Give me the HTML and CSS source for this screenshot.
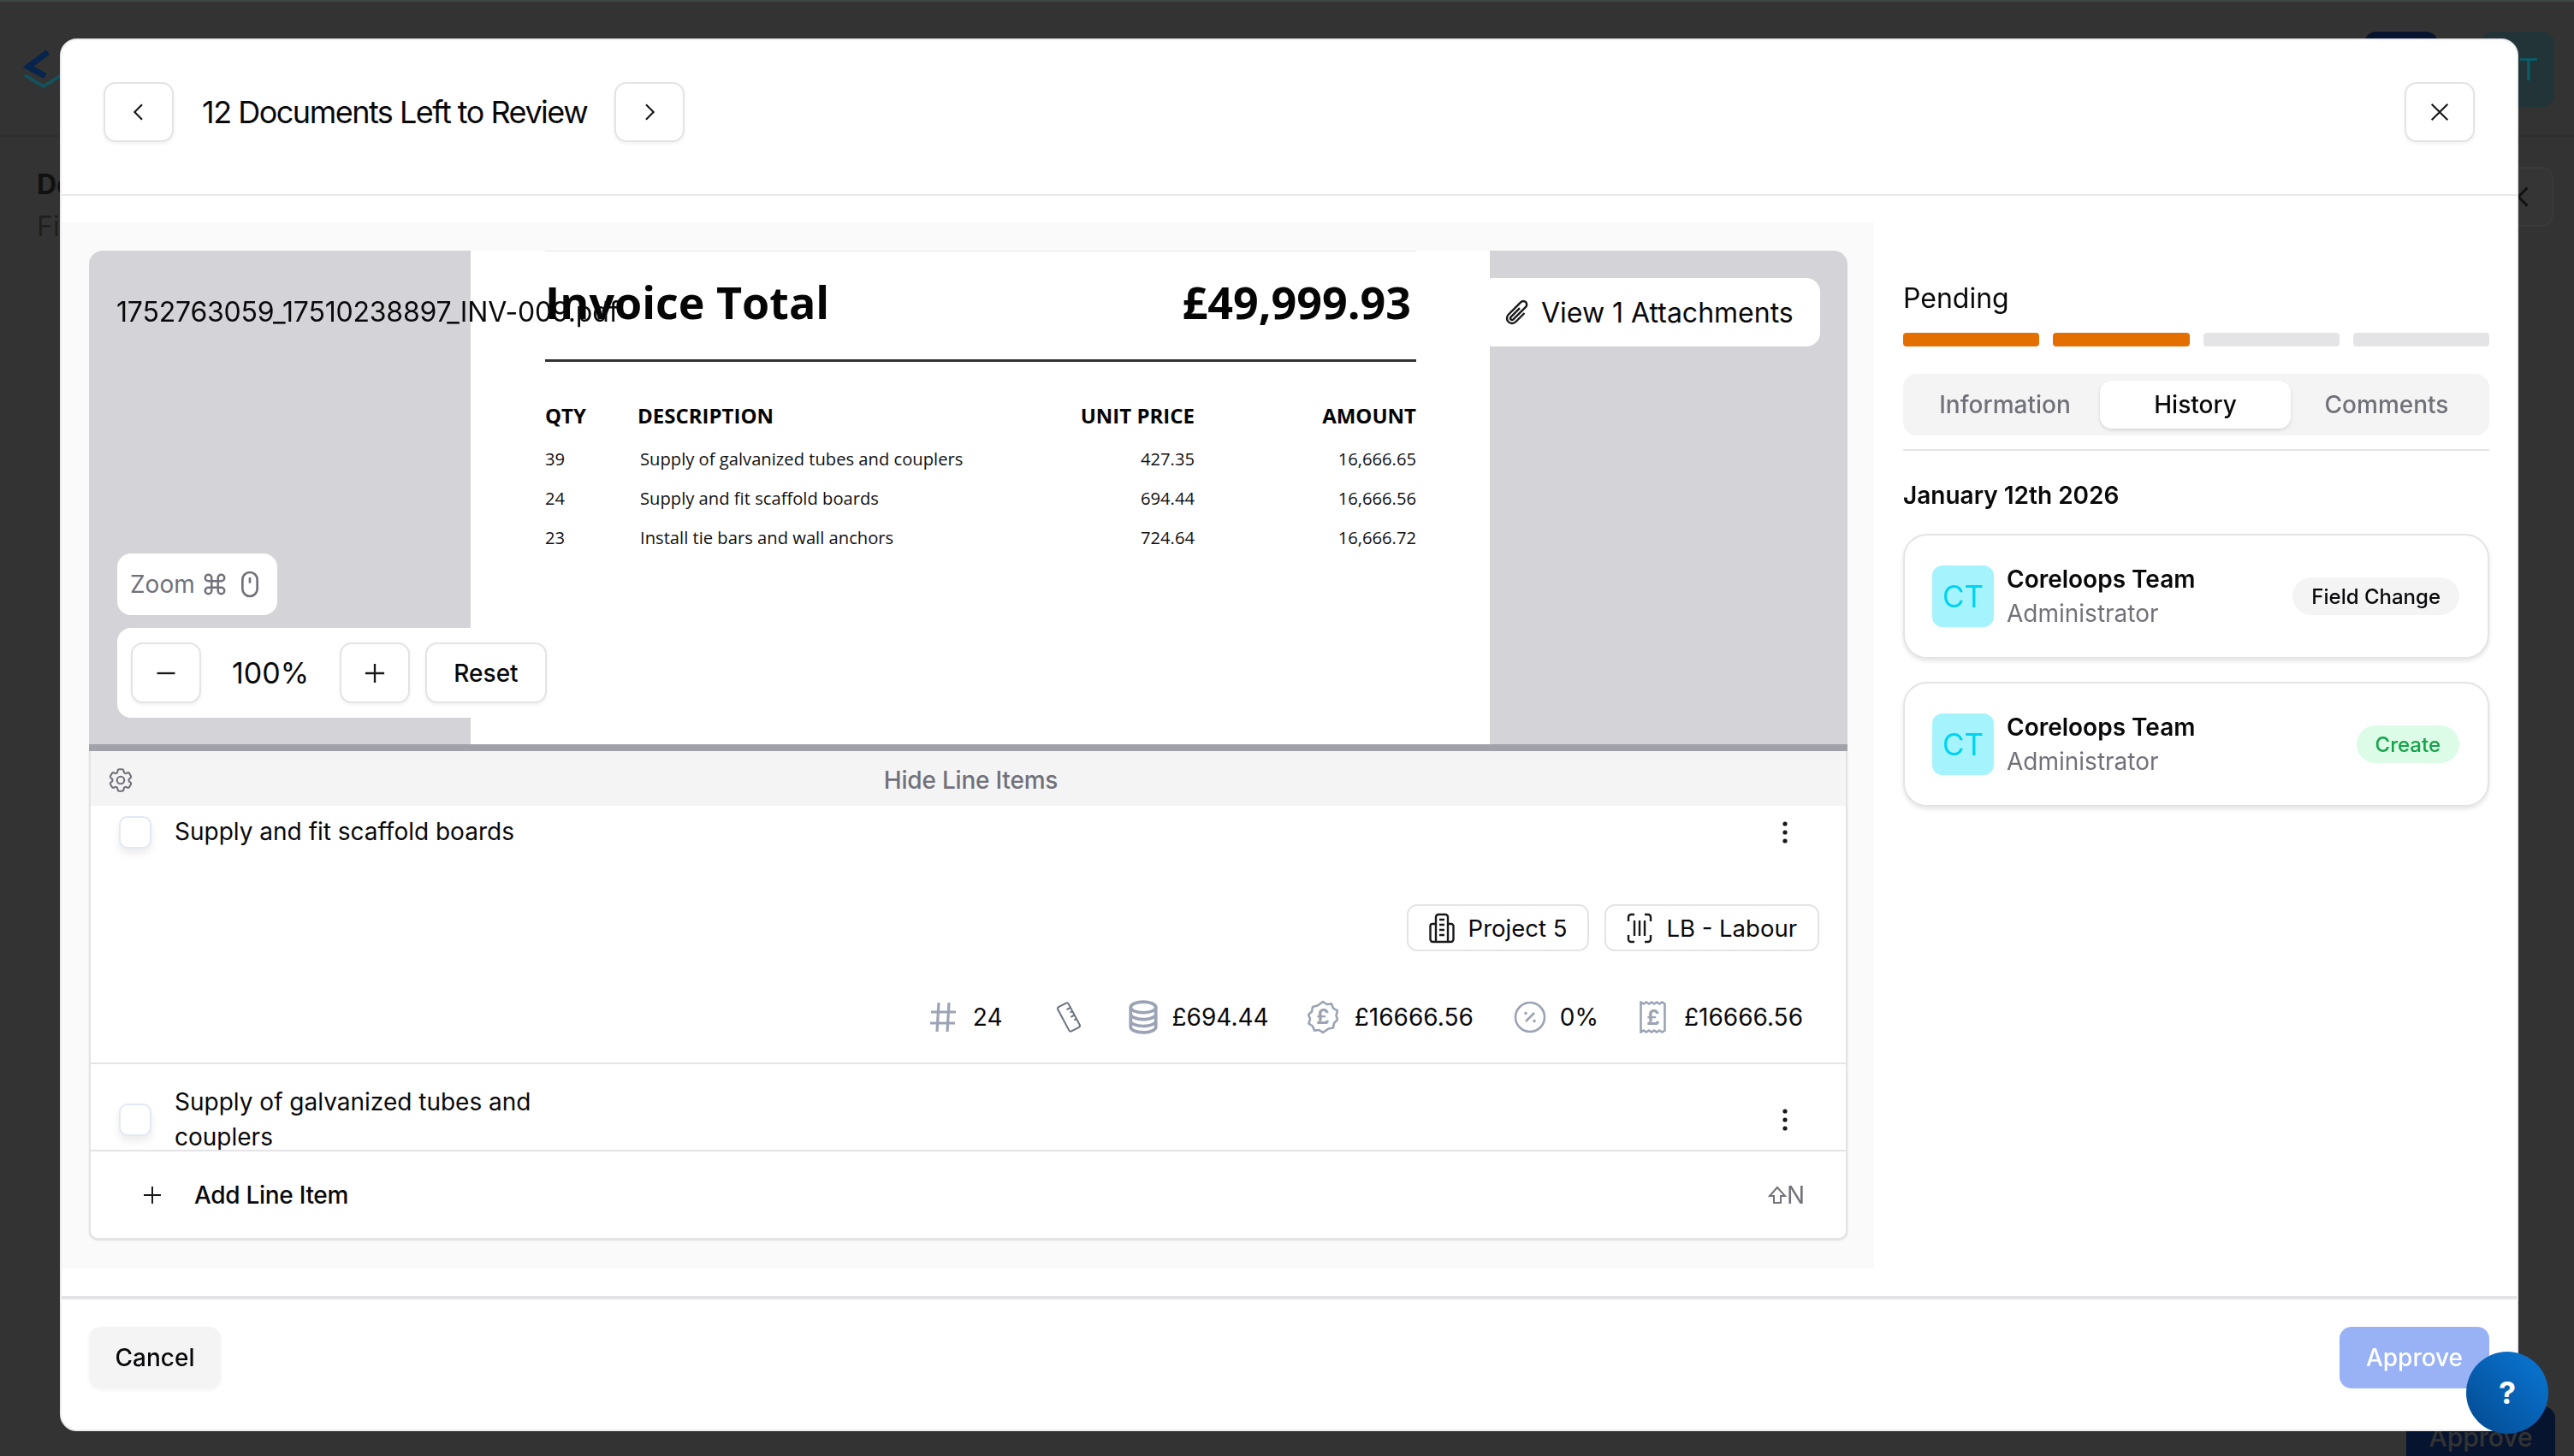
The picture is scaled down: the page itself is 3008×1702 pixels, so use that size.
FILE: index.html
```html
<!DOCTYPE html>
<html lang="en">
<head>
<meta charset="utf-8">
<title>Documents</title>
<link rel="stylesheet" href="styles.css">
</head>
<body>
<div class="backdrop-page">
  <header class="bg-header">
    <svg class="bg-logo" viewBox="0 0 48 48" width="48" height="48"><path d="M30 3 7 20l20 11" fill="none" stroke="#06244c" stroke-width="7"/><path d="M3 30l22 13 22-14" fill="none" stroke="#14525c" stroke-width="4"/></svg>
    <div class="bg-actions"><span class="bg-navy"></span><span class="bg-teal">CT</span></div>
  </header>
  <div class="bg-heading"><strong>Documents</strong><span>Files</span></div>
  <div class="bg-back"><svg viewBox="0 0 24 24" width="36" height="36"><path d="M15 5l-7 7 7 7" fill="none" stroke="#111" stroke-width="2"/></svg></div>
  <div class="bg-approve">Approve</div>
</div>

<div class="modal">
  <div class="modal-head">
    <button class="icon-btn"><svg class="ico-sm" viewBox="0 0 24 24"><path d="M15 5.500 8.500 12l6.500 6.500"/></svg></button>
    <h1 class="modal-title">12 Documents Left to Review</h1>
    <button class="icon-btn"><svg class="ico-sm" viewBox="0 0 24 24"><path d="M9 5.500 15.500 12 9 18.500"/></svg></button>
    <button class="icon-btn close-btn"><svg class="ico-sm" viewBox="0 0 24 24"><path d="M5 5l14 14M19 5 5 19"/></svg></button>
  </div>

  <div class="modal-main">
    <section class="work">
      <div class="viewer">
        <div class="pdf-page">
          <div class="inv-top"><span>Invoice Total</span><span>£49,999.93</span></div>
          <div class="inv-table">
            <b>QTY</b><b>DESCRIPTION</b><b class="r">UNIT PRICE</b><b class="r">AMOUNT</b>
            <span>39</span><span class="d">Supply of galvanized tubes and couplers</span><span class="r">427.35</span><span class="r">16,666.65</span>
            <span>24</span><span class="d">Supply and fit scaffold boards</span><span class="r">694.44</span><span class="r">16,666.56</span>
            <span>23</span><span class="d">Install tie bars and wall anchors</span><span class="r">724.64</span><span class="r">16,666.72</span>
          </div>
        </div>
        <div class="file-name">1752763059_17510238897_INV-009.pdf</div>
        <button class="attach"><svg class="ico-clip" viewBox="0 0 24 24"><path d="m18.375 12.739-7.693 7.693a4.500 4.500 0 0 1-6.364-6.364l10.94-10.94A3 3 0 1 1 19.500 7.372L8.552 18.320m.009-.01-.01.01m5.699-9.941-7.810 7.810a1.500 1.500 0 0 0 2.112 2.130"/></svg>View 1 Attachments</button>
        <div class="zoom-hint">Zoom
          <svg class="ico-cmd" viewBox="0 0 24 24"><path d="M15 6v12a3 3 0 1 0 3-3H6a3 3 0 1 0 3 3V6a3 3 0 1 0-3 3h12a3 3 0 1 0-3-3"/></svg>
          <svg class="ico-mouse" viewBox="0 0 16 24"><rect x="1.500" y="1.500" width="13" height="21" rx="6.500"/><path d="M8 6v5"/></svg>
        </div>
        <div class="zoom-ctrl">
          <button class="zbtn"><svg class="ico-z" viewBox="0 0 24 24"><path d="M3 12h18"/></svg></button>
          <span class="zval">100%</span>
          <button class="zbtn"><svg class="ico-z" viewBox="0 0 24 24"><path d="M12 2.500v19M2.500 12h19"/></svg></button>
          <button class="zbtn zreset">Reset</button>
        </div>
      </div>

      <div class="lines">
        <div class="lines-bar">
          <svg class="ico-gear" viewBox="0 0 24 24"><path d="M9.594 3.940c.09-.542.56-.94 1.110-.94h2.593c.55 0 1.020.398 1.110.94l.213 1.281c.063.374.313.686.645.870.074.040.147.083.22.127.325.196.72.257 1.075.124l1.217-.456a1.125 1.125 0 0 1 1.370.49l1.296 2.247a1.125 1.125 0 0 1-.26 1.431l-1.003.827c-.293.241-.438.613-.43.992a7.723 7.723 0 0 1 0 .255c-.008.378.137.75.43.991l1.004.827c.424.35.534.955.26 1.430l-1.298 2.247a1.125 1.125 0 0 1-1.369.491l-1.217-.456c-.355-.133-.75-.072-1.076.124a6.470 6.470 0 0 1-.22.128c-.331.183-.581.495-.644.869l-.213 1.281c-.09.543-.56.94-1.110.94h-2.594c-.55 0-1.019-.398-1.110-.94l-.213-1.281c-.062-.374-.312-.686-.644-.87a6.520 6.520 0 0 1-.22-.127c-.325-.196-.72-.257-1.076-.124l-1.217.456a1.125 1.125 0 0 1-1.369-.49l-1.297-2.247a1.125 1.125 0 0 1 .26-1.431l1.004-.827c.292-.24.437-.613.43-.991a6.932 6.932 0 0 1 0-.255c.007-.38-.138-.751-.43-.992l-1.004-.827a1.125 1.125 0 0 1-.26-1.430l1.297-2.247a1.125 1.125 0 0 1 1.370-.491l1.216.456c.356.133.751.072 1.076-.124.072-.044.146-.086.22-.128.332-.183.582-.495.644-.869l.214-1.280Z"/><circle cx="12" cy="12" r="3"/></svg>
          <span>Hide Line Items</span>
        </div>
        <div class="items">
          <article class="item item-first">
            <div class="item-row">
              <span class="check"></span>
              <p class="item-name">Supply and fit scaffold boards</p>
              <svg class="ico-dots" viewBox="0 0 8 28"><circle cx="4" cy="4" r="2.600"/><circle cx="4" cy="14" r="2.600"/><circle cx="4" cy="24" r="2.600"/></svg>
            </div>
            <div class="chips">
              <span class="chip"><svg class="ico-chip" viewBox="0 0 30 38"><path d="M8 35V6a3 3 0 0 1 3-3h8a3 3 0 0 1 3 3v29M8 14H4a2.500 2.500 0 0 0-2.500 2.500V32A3 3 0 0 0 4.500 35h21a3 3 0 0 0 3-3V16.500A2.500 2.500 0 0 0 26 14h-4M12 9h6M12 15h6M12 21h6M12 27h6"/></svg>Project 5</span>
              <span class="chip"><svg class="ico-chip" viewBox="0 0 30 38"><path d="M2 11V6a3 3 0 0 1 3-3h4M21 3h4a3 3 0 0 1 3 3v5M28 27v5a3 3 0 0 1-3 3h-4M9 35H5a3 3 0 0 1-3-3v-5M9 10v18M15 10v18M21 10v18"/></svg>LB - Labour</span>
            </div>
            <div class="metrics">
              <span class="metric"><svg class="m-ico m-hash" viewBox="0 0 32 38"><path d="M11 2 9 36M23 2l-2 34M2 13h29M1 26h29"/></svg>24</span>
              <span class="metric metric-empty"><svg class="m-ico m-ruler" viewBox="0 0 34 38"><g transform="rotate(-28 17 19)"><rect x="10" y="3" width="14" height="32" rx="2"/><path d="M24 10h-5M24 15h-3M24 20h-5M24 25h-3"/></g></svg></span>
              <span class="metric metric-stack"><svg class="m-ico m-stack" viewBox="0 0 34 38"><ellipse cx="17" cy="8" rx="14" ry="6"/><path d="M3 8v22c0 3.300 6.300 6 14 6s14-2.700 14-6V8M3 15.500c0 3.300 6.300 6 14 6s14-2.700 14-6M3 23c0 3.300 6.300 6 14 6s14-2.700 14-6"/></svg>£694.44</span>
              <span class="metric"><svg class="m-ico m-badge" viewBox="0 0 36 40"><path d="M18 2l4.500 3 5.500-.5 2 5 5 3-1.500 5.500 1.500 5-4 4-1 5.500-5.500 1L18 38l-4.500-3-5.500.5-2-5-4.500-3L3 22l-2-5 4-3.500L6 8l5.500-1.500z"/><text class="m-text" x="18" y="28" text-anchor="middle">£</text></svg>£16666.56</span>
              <span class="metric metric-pct"><svg class="m-ico m-pct" viewBox="0 0 38 38"><circle cx="19" cy="19" r="17"/><path d="M24 14 14 24"/><circle class="m-fill" cx="14" cy="14.500" r="1.800"/><circle class="m-fill" cx="24" cy="23.500" r="1.800"/></svg>0%</span>
              <span class="metric metric-total"><svg class="m-ico m-receipt" viewBox="0 0 32 38"><path d="M1.500 1.500l3.250 2 3-2 3.250 2 3-2 3 2 3-2 3.250 2 3-2 3.250 2V34.500l-3.250 2-3-2-3.250 2-3-2-3 2-3-2-3.250 2-3-2-3.250 2z" /><text class="m-text" x="16" y="28" text-anchor="middle">£</text></svg>£16666.56</span>
            </div>
          </article>
          <article class="item item-second">
            <div class="item-row">
              <span class="check"></span>
              <p class="item-name">Supply of galvanized tubes and couplers</p>
              <svg class="ico-dots" viewBox="0 0 8 28"><circle cx="4" cy="4" r="2.600"/><circle cx="4" cy="14" r="2.600"/><circle cx="4" cy="24" r="2.600"/></svg>
            </div>
          </article>
        </div>
        <div class="add-row">
          <svg class="ico-plus" viewBox="0 0 24 24"><path d="M12 2v20M2 12h20"/></svg>
          <span class="add-label">Add Line Item</span>
          <span class="kbd"><svg class="ico-shift" viewBox="0 0 22 24"><path d="M11 3 2 13h5v8h8v-8h5z"/></svg>N</span>
        </div>
      </div>
    </section>

    <aside class="side">
      <div class="status">Pending</div>
      <div class="steps"><i class="on"></i><i class="on"></i><i></i><i></i></div>
      <div class="tabs"><span>Information</span><span class="active">History</span><span>Comments</span></div>
      <h2 class="date">January 12th 2026</h2>
      <div class="h-card">
        <span class="avatar">CT</span>
        <div class="who"><strong>Coreloops Team</strong><span>Administrator</span></div>
        <span class="pill">Field Change</span>
      </div>
      <div class="h-card">
        <span class="avatar">CT</span>
        <div class="who"><strong>Coreloops Team</strong><span>Administrator</span></div>
        <span class="pill pill-green">Create</span>
      </div>
    </aside>
  </div>

  <footer class="modal-foot">
    <button class="btn-cancel">Cancel</button>
    <button class="btn-approve">Approve</button>
  </footer>
</div>

<button class="help">?</button>
</body>
</html>
```

FILE: styles.css
```css
* { box-sizing: border-box; }
html, body { margin: 0; height: 100%; }
body {
  background: #333333;
  font-family: Inter, "Noto Sans", sans-serif;
  color: #09090b;
  overflow: hidden;
  border-top: 2px solid #3f4746;
}
button { font-family: inherit; color: inherit; cursor: pointer; }
p, h1, h2 { margin: 0; font-weight: inherit; }
svg { display: block; flex: none; fill: none; stroke: currentColor; }

/* page dimmed behind the dialog */
.bg-header {
  height: 158px;
  display: flex;
  align-items: flex-start;
  justify-content: space-between;
  padding: 35px 23px 0 26px;
  border-bottom: 2px solid #2e2e2e;
}
.bg-logo { margin-top: 21px; }
.bg-actions { display: flex; gap: 50px; }
.bg-navy { width: 86px; height: 88px; border-radius: 14px; background: #07142f; }
.bg-teal {
  width: 86px; height: 88px; border-radius: 14px; background: #223438;
  color: #0b5b66; font-size: 36px; display: flex; align-items: center; justify-content: center;
}
.bg-heading { padding: 36px 0 0 43px; display: flex; flex-direction: column; gap: 10px; font-size: 32px; color: #111; }
.bg-heading span { color: #1f1f1f; }
.bg-back {
  position: absolute; left: 2900px; top: 195px; width: 84px; height: 70px;
  display: flex; align-items: center; justify-content: flex-end; padding-right: 15px;
  border: 2px solid #3a3a3a; border-radius: 14px; background: #353535;
}
.bg-approve {
  position: absolute; left: 2812px; top: 1644px; width: 174px; height: 58px;
  background: #07142f; color: #333; font-size: 30px; font-weight: 500;
  display: flex; align-items: flex-end; justify-content: center; padding-bottom: 4px;
  border-radius: 14px 14px 0 0;
}

/* dialog */
.modal {
  position: fixed; left: 70px; top: 45px; width: 2873px; height: 1628px;
  background: #fff; border: 2px solid #ededee; border-radius: 20px;
  display: flex; flex-direction: column; overflow: hidden;
}
.modal-head {
  height: 182px; flex: none;
  display: flex; align-items: flex-start;
  padding: 49px 49px 0;
  border-bottom: 2px solid #e8e8ea;
}
.icon-btn {
  width: 82px; height: 70px; padding: 0;
  display: flex; align-items: center; justify-content: center;
  background: #fff; border: 2px solid #e4e4e7; border-radius: 14px;
  box-shadow: 0 2px 4px rgba(0,0,0,.06);
}
.ico-sm { width: 32px; height: 32px; stroke: #18181b; stroke-width: 1.600; }
.ico-z { width: 28px; height: 28px; stroke: #18181b; stroke-width: 2; }
.modal-title { font-size: 36px; line-height: 70px; font-weight: 400; margin: 0 32px 0 33px; letter-spacing: -1.5px; }
.close-btn { margin-left: auto; }

.modal-main { flex: 1; display: flex; min-height: 0; padding-top: 31px; }
.work {
  width: 2118px; height: 1223px; flex: none; background: #fafafa;
  padding: 33px 31px 34px 32px;
  display: flex; flex-direction: column;
}
.viewer {
  height: 585px; flex: none; position: relative;
  background: #d4d4d8; border-bottom: 8px solid #a1a1aa;
  border-radius: 16px 16px 0 0; overflow: hidden;
  padding-left: 446px;
}
.pdf-page {
  width: 1191px; height: 100%; background: #fff;
  padding: 0 86px 0 87px;
  font-family: "Open Sans", "Noto Sans", sans-serif;
}
.inv-top {
  height: 130px; display: flex; justify-content: space-between; align-items: center;
  font-size: 52px; font-weight: 700; color: #050505;
  border-top: 1px solid #e7e7e7; border-bottom: 3px solid #333;
  padding: 0 6px 9px 0;
}
.inv-table {
  display: grid; grid-template-columns: 108px 1fr 240px 259px;
  grid-auto-rows: 46px; align-items: center;
  padding-top: 40px; font-size: 20.2px; color: #111;
}
.inv-table b { font-size: 24px; font-weight: 700; height: 50px; line-height: 50px; color: #050505; }
.inv-table > span { position: relative; top: 4px; }
.inv-table .r { text-align: right; }
.inv-table .d { padding-left: 3px; }

.file-name {
  position: absolute; left: 32px; top: 50px;
  font-size: 32px; line-height: 44px; letter-spacing: -0.2px; white-space: nowrap; color: #09090b;
}
.attach {
  position: absolute; right: 32px; top: 32px; height: 80px; width: 398px;
  display: flex; align-items: center; gap: 12px; padding: 0 0 0 28px;
  background: #fff; border: 0; border-radius: 16px; font-size: 32px;
}
.ico-clip { width: 32px; height: 32px; stroke: #18181b; stroke-width: 1.800; }
.zoom-hint {
  position: absolute; left: 33px; top: 354px; width: 187px; height: 72px;
  display: flex; align-items: center; gap: 8px; padding-left: 15px;
  background: #fff; border-radius: 16px; color: #71717a; font-size: 28px;
}
.ico-cmd { width: 30px; height: 30px; stroke-width: 2; }
.ico-mouse { width: 24px; height: 32px; stroke-width: 2; margin-left: 6px; }
.zoom-ctrl {
  position: absolute; left: 33px; top: 441px; width: 520px; height: 105px;
  display: flex; align-items: center; padding-left: 16px;
  background: #fff; border-radius: 16px;
}
.zbtn {
  width: 82px; height: 71px; padding: 0;
  display: flex; align-items: center; justify-content: center;
  background: #fff; border: 2px solid #e4e4e7; border-radius: 14px;
  box-shadow: 0 2px 4px rgba(0,0,0,.06); font-size: 28px; font-weight: 500;
}
.zval { width: 162px; text-align: center; font-size: 34px; }
.zreset { width: 142px; margin-left: 18px; }

.lines {
  flex: 1; min-height: 0; background: #fff;
  border: 2px solid #e4e4e7; border-top: 0;
  border-radius: 0 0 10px 10px;
  display: flex; flex-direction: column;
  box-shadow: 0 1px 2px rgba(0,0,0,.12);
}
.lines-bar {
  height: 64px; flex: none; position: relative;
  display: flex; align-items: center; justify-content: center;
  padding: 4px 0 0 6px; background: #f4f4f5; color: #71717a; font-size: 28px; font-weight: 500; letter-spacing: -0.2px;
}
.ico-gear { position: absolute; left: 18px; top: 17px; width: 34px; height: 34px; stroke-width: 1.500; }
.items { height: 402px; flex: none; overflow: hidden; }
.item-first { height: 302px; padding-top: 10px; border-bottom: 2px solid #e4e4e7; }
.item-second { padding-top: 24px; }
.item-row { display: flex; align-items: center; padding: 0 67px 0 33px; }
.check {
  width: 38px; height: 38px; flex: none; background: #fff;
  border: 2px solid #e2e8f5; border-radius: 10px;
  box-shadow: 0 6px 10px rgba(0,0,0,.08);
}
.item-name { font-size: 28px; line-height: 41px; margin-left: 27px; width: 460px; flex: none; }
.ico-dots { margin-left: auto; width: 8px; height: 28px; fill: #18181b; stroke: none; }
.chips { display: flex; justify-content: flex-end; gap: 18px; margin-top: 64px; padding-right: 31px; }
.chip {
  height: 55px; display: flex; align-items: center; gap: 16px; padding: 0 24px;
  border: 2px solid #e4e4e7; border-radius: 12px; font-size: 27.5px;
}
.ico-chip { width: 30px; height: 38px; stroke: #18181b; stroke-width: 2.400; }
.metrics { display: flex; justify-content: flex-end; align-items: center; gap: 47px; margin-top: 57px; padding-right: 50px; height: 40px; }
.metric { display: flex; align-items: center; gap: 19px; font-size: 28px; }
.metric-empty { margin: 0 5px 0 14px; }
.metric-stack { gap: 15px; margin-right: -2px; }
.metric-pct { gap: 16px; }
.metric-total { gap: 20px; margin-left: 1px; }
.m-ico { height: 38px; stroke: #9ca3b4; stroke-width: 2.600; }
.m-hash { width: 32px; stroke-width: 3.200; }
.m-ruler { width: 34px; stroke: #6b7280; stroke-width: 2; }
.m-stack { width: 36px; height: 40px; stroke-width: 3.500; }
.m-badge { width: 36px; height: 40px; }
.m-pct { width: 38px; }
.m-receipt { width: 32px; }
.m-fill { fill: #9ca3b4; stroke: none; }
.m-text { font-family: Inter, sans-serif; font-size: 24px; font-weight: 700; fill: #9ca3b4; stroke: none; }
.add-row {
  flex: 1; display: flex; align-items: center; padding: 0 48px 0 60px;
  border-top: 2px solid #e4e4e7; font-size: 28px;
}
.ico-plus { width: 24px; height: 24px; stroke: #18181b; stroke-width: 2; }
.add-label { margin-left: 37px; font-weight: 500; font-size: 28px; letter-spacing: -0.3px; }
.kbd { margin-left: auto; display: flex; align-items: center; gap: 0; color: #71717a; font-size: 28px; }
.ico-shift { width: 22px; height: 24px; stroke-width: 2; }

.side { flex: 1; padding: 67px 32px 0 34px; display: flex; flex-direction: column; }
.status { font-size: 32px; line-height: 44px; }
.steps { display: flex; gap: 16px; margin-top: 18px; }
.steps i { flex: 1; height: 16px; border-radius: 4px; background: #e4e4e7; }
.steps i.on { background: #e36f00; }
.tabs {
  display: grid; grid-template-columns: 222px 223px 1fr; align-items: center;
  height: 72px; margin-top: 32px; padding: 8px;
  background: #f4f4f5; border-radius: 16px;
  color: #71717a; font-size: 28px; font-weight: 500; text-align: center;
}
.tabs span { line-height: 56px; }
.tabs .active { background: #fff; color: #09090b; border-radius: 14px; box-shadow: 0 2px 4px rgba(0,0,0,.12); }
.date {
  margin-top: 16px; padding-top: 34px; border-top: 2px solid #e4e4e7;
  font-size: 28px; line-height: 36px; font-weight: 600;
}
.h-card {
  height: 146px; margin-top: 27px; display: flex; align-items: center; padding: 0 33px 0 32px;
  border: 2px solid #e4e4e7; border-radius: 28px; background: #fff;
  box-shadow: 0 3px 5px rgba(0,0,0,.1);
}
.avatar {
  width: 72px; height: 72px; flex: none; border-radius: 12px;
  background: #a5f3fc; color: #00d3f2; font-size: 35px; font-weight: 400;
  display: flex; align-items: center; justify-content: center;
}
.who { margin-left: 15px; display: flex; flex-direction: column; line-height: 40px; font-size: 28px; }
.who strong { font-weight: 600; }
.who span { color: #71717a; }
.pill {
  margin-left: auto; height: 44px; padding: 0 22px; display: flex; align-items: center;
  border-radius: 22px; background: #f4f4f5; font-size: 24px; font-weight: 500;
}
.pill-green { background: #dcfce7; color: #16a34a; }

.modal-foot {
  height: 156px; flex: none; display: flex; justify-content: space-between;
  padding: 32px 32px 0; border-top: 4px solid #e4e4e7;
}
.btn-cancel, .btn-approve {
  height: 72px; border: 0; border-radius: 14px; font-size: 28px; font-weight: 500;
}
.btn-cancel { width: 154px; background: #f4f4f5; box-shadow: 0 2px 4px rgba(0,0,0,.05); }
.btn-approve { width: 175px; background: #98b2f5; color: #fff; }

.help {
  position: fixed; left: 2882px; top: 1580px; width: 96px; height: 96px; border-radius: 50%;
  border: 0; color: #fff; font-size: 36px; font-weight: 700;
  background: linear-gradient(45deg, #03498f, #0a78d6);
}
```
